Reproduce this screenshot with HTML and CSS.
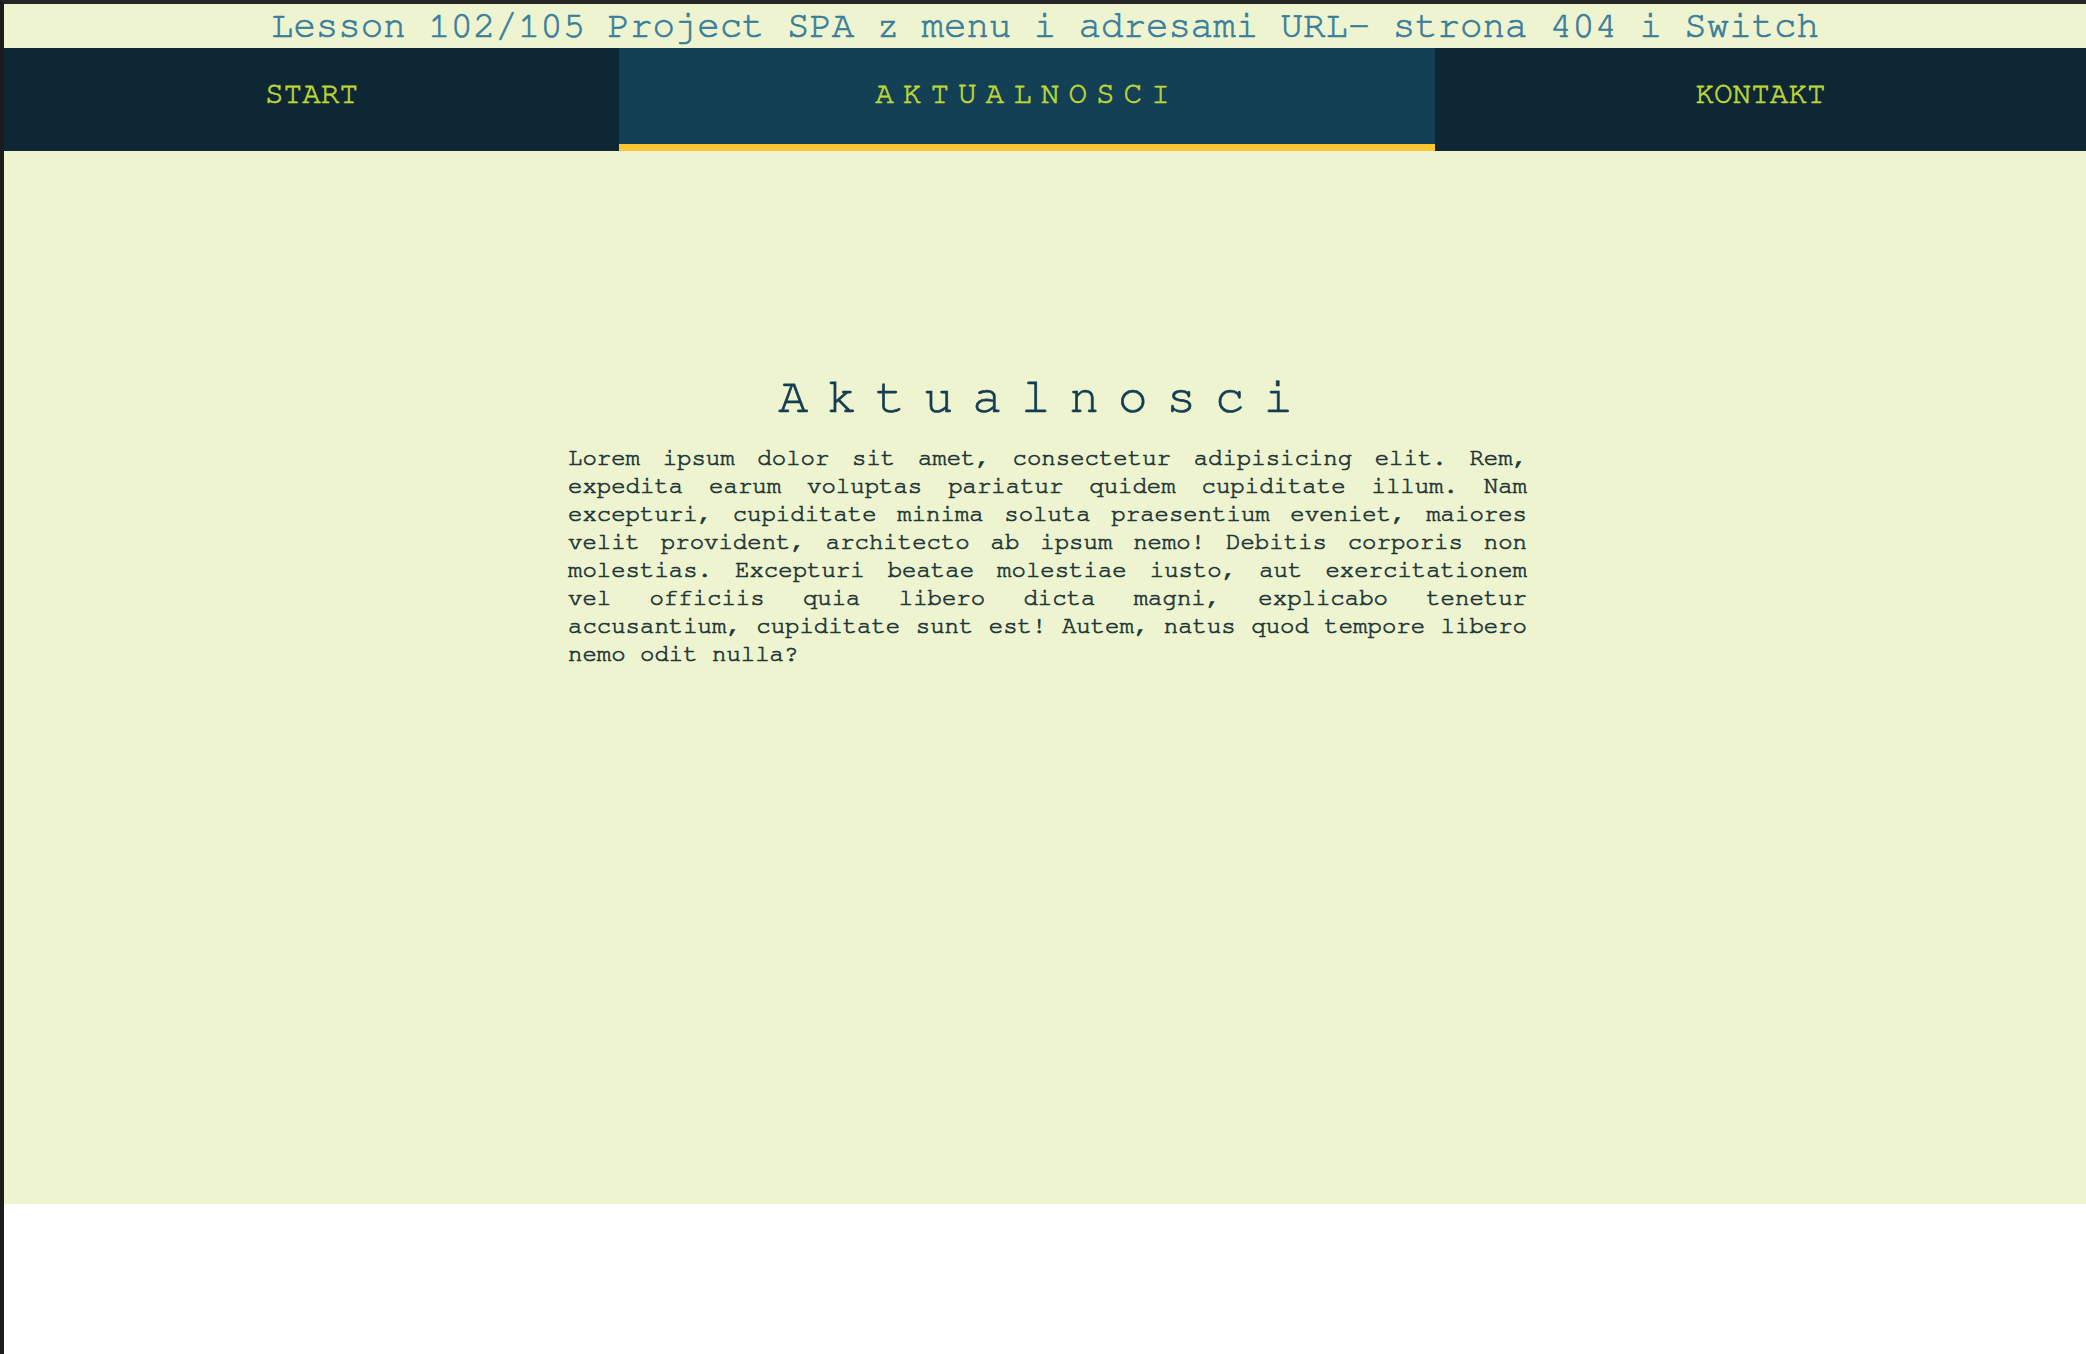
FILE: index.html
```html
<!DOCTYPE html>
<html lang="pl">
<head>
<meta charset="utf-8">
<title>Lesson 102/105</title>
<link rel="stylesheet" href="styles.css">
</head>
<body>
<div class="frame">
  <div class="app">
    <header class="header">
      <h1 class="title">Lesson 102/105 Project SPA z menu i adresami URL- strona 404 i Switch</h1>
    </header>
    <nav class="nav">
      <ul class="nav-list">
        <li class="nav-item nav-start"><a class="nav-link" href="#">START</a></li>
        <li class="nav-item nav-news active"><a class="nav-link" href="#">AKTUALNOSCI</a></li>
        <li class="nav-item nav-contact"><a class="nav-link" href="#">KONTAKT</a></li>
      </ul>
    </nav>
    <main class="page">
      <h2 class="page-title">Aktualnosci</h2>
      <p class="page-text">Lorem ipsum dolor sit amet, consectetur adipisicing elit. Rem, expedita earum voluptas pariatur quidem cupiditate illum. Nam excepturi, cupiditate minima soluta praesentium eveniet, maiores velit provident, architecto ab ipsum nemo! Debitis corporis non molestias. Excepturi beatae molestiae iusto, aut exercitationem vel officiis quia libero dicta magni, explicabo tenetur accusantium, cupiditate sunt est! Autem, natus quod tempore libero nemo odit nulla?</p>
    </main>
  </div>
</div>
</body>
</html>
```
FILE: styles.css
```css
html, body {
  margin: 0;
  padding: 0;
  background: #ffffff;
}

body {
  font-family: "Nimbus Mono PS", "Nimbus Mono L", "FreeMono", "Courier 10 Pitch", "Liberation Mono", "Courier New", monospace;
  -webkit-text-stroke: 0.7px currentColor;
}

.frame {
  box-sizing: border-box;
  min-height: 100vh;
  border-top: 4px solid #262626;
  border-left: 4px solid #1c1c1c;
}

.app {
  background: #eef4d0;
  height: 1200px;
  display: flex;
  flex-direction: column;
}

.header {
  height: 44px;
  display: flex;
  align-items: center;
  justify-content: center;
}

.title {
  margin: 0;
  font-size: 37.4px;
  font-weight: normal;
  line-height: 44px;
  color: #3a7d9b;
  text-align: center;
  white-space: nowrap;
}

.nav {
  background: #0e2735;
}

.nav-list {
  list-style: none;
  margin: 0;
  padding: 0;
  display: flex;
}

.nav-item {
  box-sizing: border-box;
  height: 103px;
  padding-top: 30px;
  text-align: center;
  flex-basis: 0;
}

.nav-start { flex-grow: 615; }
.nav-news { flex-grow: 816; }
.nav-contact { flex-grow: 651; }

.nav-item.active {
  background: #134054;
  border-bottom: 7px solid #fdc631;
}

.nav-link {
  font-size: 31px;
  color: #bdd637;
  text-decoration: none;
}

.active .nav-link {
  letter-spacing: 9px;
}

.page {
  flex: 1;
  padding-top: 221px;
}

.page-title {
  margin: 0 0 22px;
  font-size: 50px;
  font-weight: normal;
  letter-spacing: 18.5px;
  color: #143d51;
  text-align: center;
}

.page-text {
  width: 959px;
  margin: 0 0 0 calc(50% - 477px);
  font-size: 24px;
  line-height: 28px;
  color: #223637;
  text-align: justify;
}
```
